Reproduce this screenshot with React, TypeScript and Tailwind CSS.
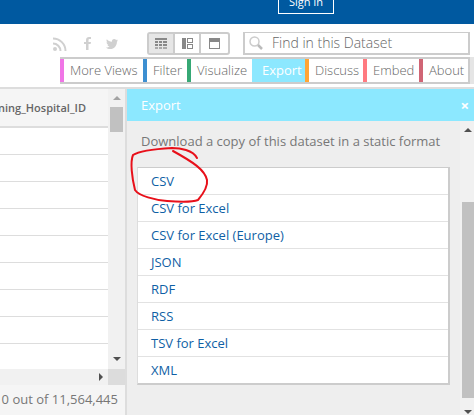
import React from 'react';

const tabs = [
  { label: 'More Views', color: 'border-l-[#f075e6]', w: 'w-[83px]' },
  { label: 'Filter', color: 'border-l-[#3d8fd1]', w: 'w-[44px]' },
  { label: 'Visualize', color: 'border-l-[#36a875]', w: 'w-[65px]' },
  { label: 'Discuss', color: 'border-l-[#ffa534]', w: 'w-[58px]' },
  { label: 'Embed', color: 'border-l-[#ff7a80]', w: 'w-[56px]' },
  { label: 'About', color: 'border-l-[#d06575]', w: 'w-[49px]' },
];

const formats = ['CSV', 'CSV for Excel', 'CSV for Excel (Europe)', 'JSON', 'RDF', 'RSS', 'TSV for Excel', 'XML'];

function Tab({ label, color, w }: { label: string; color: string; w: string }) {
  return (
    <div className={`${w} h-full border-l-4 ${color} pl-[6px] leading-[23px] font-light text-[#666] whitespace-nowrap`}>{label}</div>
  );
}

export default function App() {
  return (
    <div
      className="relative w-[474px] h-[415px] overflow-hidden bg-white text-[13px] text-[#777]"
      style={{ fontFamily: '"Open Sans", sans-serif' }}
    >
      {/* top bar */}
      <div className="h-[24px] bg-[#0059a0] flex pl-[278px] items-start">
        <div className="w-[56px] h-[14px] border border-t-0 border-white text-white text-[11px] leading-[3px] text-center overflow-hidden">
          Sign In
        </div>
      </div>

      {/* toolbar */}
      <div className="h-[65px] border-b-2 border-[#ddd]">
        <div className="flex h-[33px] items-start pt-[8px]">
          <div className="w-[147px] h-[23px] flex items-center pl-[53px] text-[#d0d0d0]">
            <svg width="14" height="14" viewBox="0 0 14 14" fill="none" stroke="#d0d0d0">
              <circle cx="2" cy="12" r="2" fill="#d0d0d0" stroke="none" />
              <path d="M0 6.500a7.500 7.500 0 0 1 7.500 7.500" strokeWidth="2" />
              <path d="M0 1.500a12.500 12.500 0 0 1 12.500 12.500" strokeWidth="2" />
            </svg>
            <svg width="8" height="13" viewBox="0 0 8 13" fill="#d0d0d0" className="ml-[17px]">
              <path d="M2 13V7H0V5h2V3.200C2 1 3.200 0 5 0h2v2H5.600C4.800 2 4.500 2.400 4.500 3.100V5H7L6.600 7H4.500v6z" />
            </svg>
            <svg width="12" height="10" viewBox="0 0 12 10" fill="#d0d0d0" className="ml-[14px]">
              <path d="M12 1.200l-1.300.4.9-1.300-1.400.6C9.600.3 8.900 0 8.200 0 6.800 0 5.700 1.200 5.900 2.800 3.800 2.700 2 1.700.8.300.2 1.500.5 2.800 1.500 3.500L.5 3.200c0 1.100.8 2.100 1.900 2.400l-1 .1c.3.900 1.200 1.600 2.200 1.600C2.600 8.100 1.300 8.600 0 8.500 1.100 9.500 2.500 10 4 10c4.500 0 7.100-3.800 6.900-7.300.5-.4.900-.9 1.100-1.500z" />
            </svg>
          </div>
          <div className="w-[83px] h-[23px] flex border-2 border-[#ccc] rounded-[3px] box-border">
            <div className="w-[26px] bg-[#e6e6e6] border-r-2 border-[#ccc] flex items-center justify-center">
              <svg width="12" height="12" viewBox="0 0 12 12" fill="#888">
                <path d="M0 0h12v2H0zM0 3h3v2H0zM4 3h3v2H4zM8 3h4v2H8zM0 6h3v2H0zM4 6h3v2H4zM8 6h4v2H8z" />
                <path d="M0 9h3v2H0zM4 9h3v2H4zM8 9h4v2H8z" fill="#aaa" />
              </svg>
            </div>
            <div className="w-[26px] border-r-2 border-[#ccc] flex items-center justify-center">
              <svg width="11" height="11" viewBox="0 0 11 11" fill="#888">
                <path d="M0 0h4v11H0z" />
                <path d="M5 0h6v5H5zM6 1v3h4V1zM5 6h6v5H5zM6 7v3h4V7z" fillRule="evenodd" />
              </svg>
            </div>
            <div className="flex-1 flex items-center justify-center">
              <svg width="11" height="11" viewBox="0 0 11 11" fill="#888">
                <path d="M0 0h11v4H0z" />
                <path d="M0 4h1v7H0zM10 4h1v7h-1zM0 10h11v1H0z" />
              </svg>
            </div>
          </div>
          <div className="ml-[13px] w-[227px] h-[23px] border border-b-2 border-x-2 border-[#ccc] flex items-center box-border">
            <svg width="14" height="14" viewBox="0 0 14 14" fill="none" className="ml-[4px]">
              <circle cx="5.500" cy="5.500" r="4.500" stroke="#ccc" strokeWidth="1.500" />
              <path d="M9 9l4 4" stroke="#bbb" strokeWidth="2.500" />
            </svg>
            <span className="ml-[9px] text-[14px] font-light text-[#666] leading-none whitespace-nowrap">Find in this Dataset</span>
          </div>
        </div>
        <div className="flex">
          <div className="w-[60px]" />
          <div className="w-[410px] h-[27px] border-y-2 border-r-2 border-[#ccc] flex box-border overflow-hidden">
            {tabs.slice(0, 3).map((t) => (
              <Tab key={t.label} {...t} />
            ))}
            <div className="w-[53px] h-full bg-[#8ce8ff] text-white pl-[10px] leading-[23px]">Export</div>
            {tabs.slice(3).map((t) => (
              <Tab key={t.label} {...t} />
            ))}
          </div>
          <div className="flex-1 h-[27px] bg-[#e5e5e5]" />
        </div>
      </div>

      {/* body */}
      <div className="flex h-[326px]">
        <div className="w-[125px] flex flex-col">
          <div className="flex-1 flex min-h-0">
            <div className="flex-1 overflow-hidden">
              <div className="h-[39px] bg-[#f5f5f5] border-b-2 border-[#ddd] text-[11px] font-semibold text-[#666] leading-[37px] pr-[22px] flex justify-end whitespace-nowrap">
                ning_Hospital_ID
              </div>
              {Array.from({ length: 8 }).map((_, i) => (
                <div key={i} className="h-[27px] border-b border-[#ddd]" />
              ))}
            </div>
            <div className="w-[17px] bg-[#f1f1f1] flex flex-col items-center">
              <div className="h-[18px] flex items-center">
                <div className="w-0 h-0 border-x-[4px] border-x-transparent border-b-[4px] border-b-[#a3a3a3]" />
              </div>
              <div className="w-[13px] h-[25px] bg-[#c1c1c1]" />
              <div className="flex-1" />
              <div className="h-[20px] flex items-center">
                <div className="w-0 h-0 border-x-[4px] border-x-transparent border-t-[4px] border-t-[#505050]" />
              </div>
            </div>
          </div>
          <div className="h-[16px] bg-[#f1f1f1] flex">
            <div className="flex-1 flex items-center justify-end pr-[5px]">
              <div className="w-0 h-0 border-y-[4px] border-y-transparent border-l-[4px] border-l-[#505050]" />
            </div>
            <div className="w-[17px] bg-[#dcdcdc]" />
          </div>
          <div className="h-[30px] bg-[#f5f5f5] text-[#777] flex justify-end pr-[7px] leading-[29px] whitespace-nowrap overflow-hidden">
            0 out of 11,564,445
          </div>
        </div>

        <div className="w-[2px] bg-[#ddd]" />

        <div className="flex-1 flex flex-col bg-[#eeeeee]">
          <div className="h-[32px] bg-[#8ce8ff] text-white pl-[14px] leading-[32px] flex justify-between">
            <span className="text-[13px]">Export</span>
            <span className="pr-[5px] font-bold text-[15px]">×</span>
          </div>
          <div className="flex-1 flex min-h-0">
            <div className="flex-1 pl-[10px]">
              <p className="pt-[10px] h-[46px] leading-[20px] pl-[4px] whitespace-nowrap">
                Download a copy of this dataset in a static format
              </p>
              <ul className="w-[313px] border border-r-2 border-b-2 border-[#ccc] border-l-[#ddd] bg-white">
                {formats.map((f, i) => (
                  <li
                    key={f}
                    className={`pl-[13px] text-[13px] text-[#0f5fa5] leading-[26px] ${i < 7 ? 'h-[27px] border-b border-[#e2e2e2]' : 'h-[26px]'}`}
                  >
                    {f}
                  </li>
                ))}
              </ul>
            </div>
            <div className="w-[14px] bg-[#f1f1f1] flex flex-col items-center pl-[2px] pt-[7px]">
              <div className="w-0 h-0 border-x-[4px] border-x-transparent border-b-[4px] border-b-[#505050]" />
              <div className="w-[12px] h-[196px] bg-[#c1c1c1] mt-[70px]" />
              <div className="w-0 h-0 mt-[12px] border-x-[4px] border-x-transparent border-t-[4px] border-t-[#505050]" />
            </div>
          </div>
        </div>
      </div>

      {/* red scribble over the CSV row */}
      <svg className="absolute left-[125px] top-[140px]" width="90" height="70" viewBox="0 0 90 70" fill="none">
        <path
          d="M72 18C68 10 55 8 47 8 30 9 14 11 8 15 5 22 7 38 10 50c4 6 20 10 32 11 13 1 26 1 31-1 5-6 10-14 9-20-2-10-14-18-34-29"
          stroke="#e8101a"
          strokeWidth="2"
          strokeLinecap="round"
        />
      </svg>
    </div>
  );
}
